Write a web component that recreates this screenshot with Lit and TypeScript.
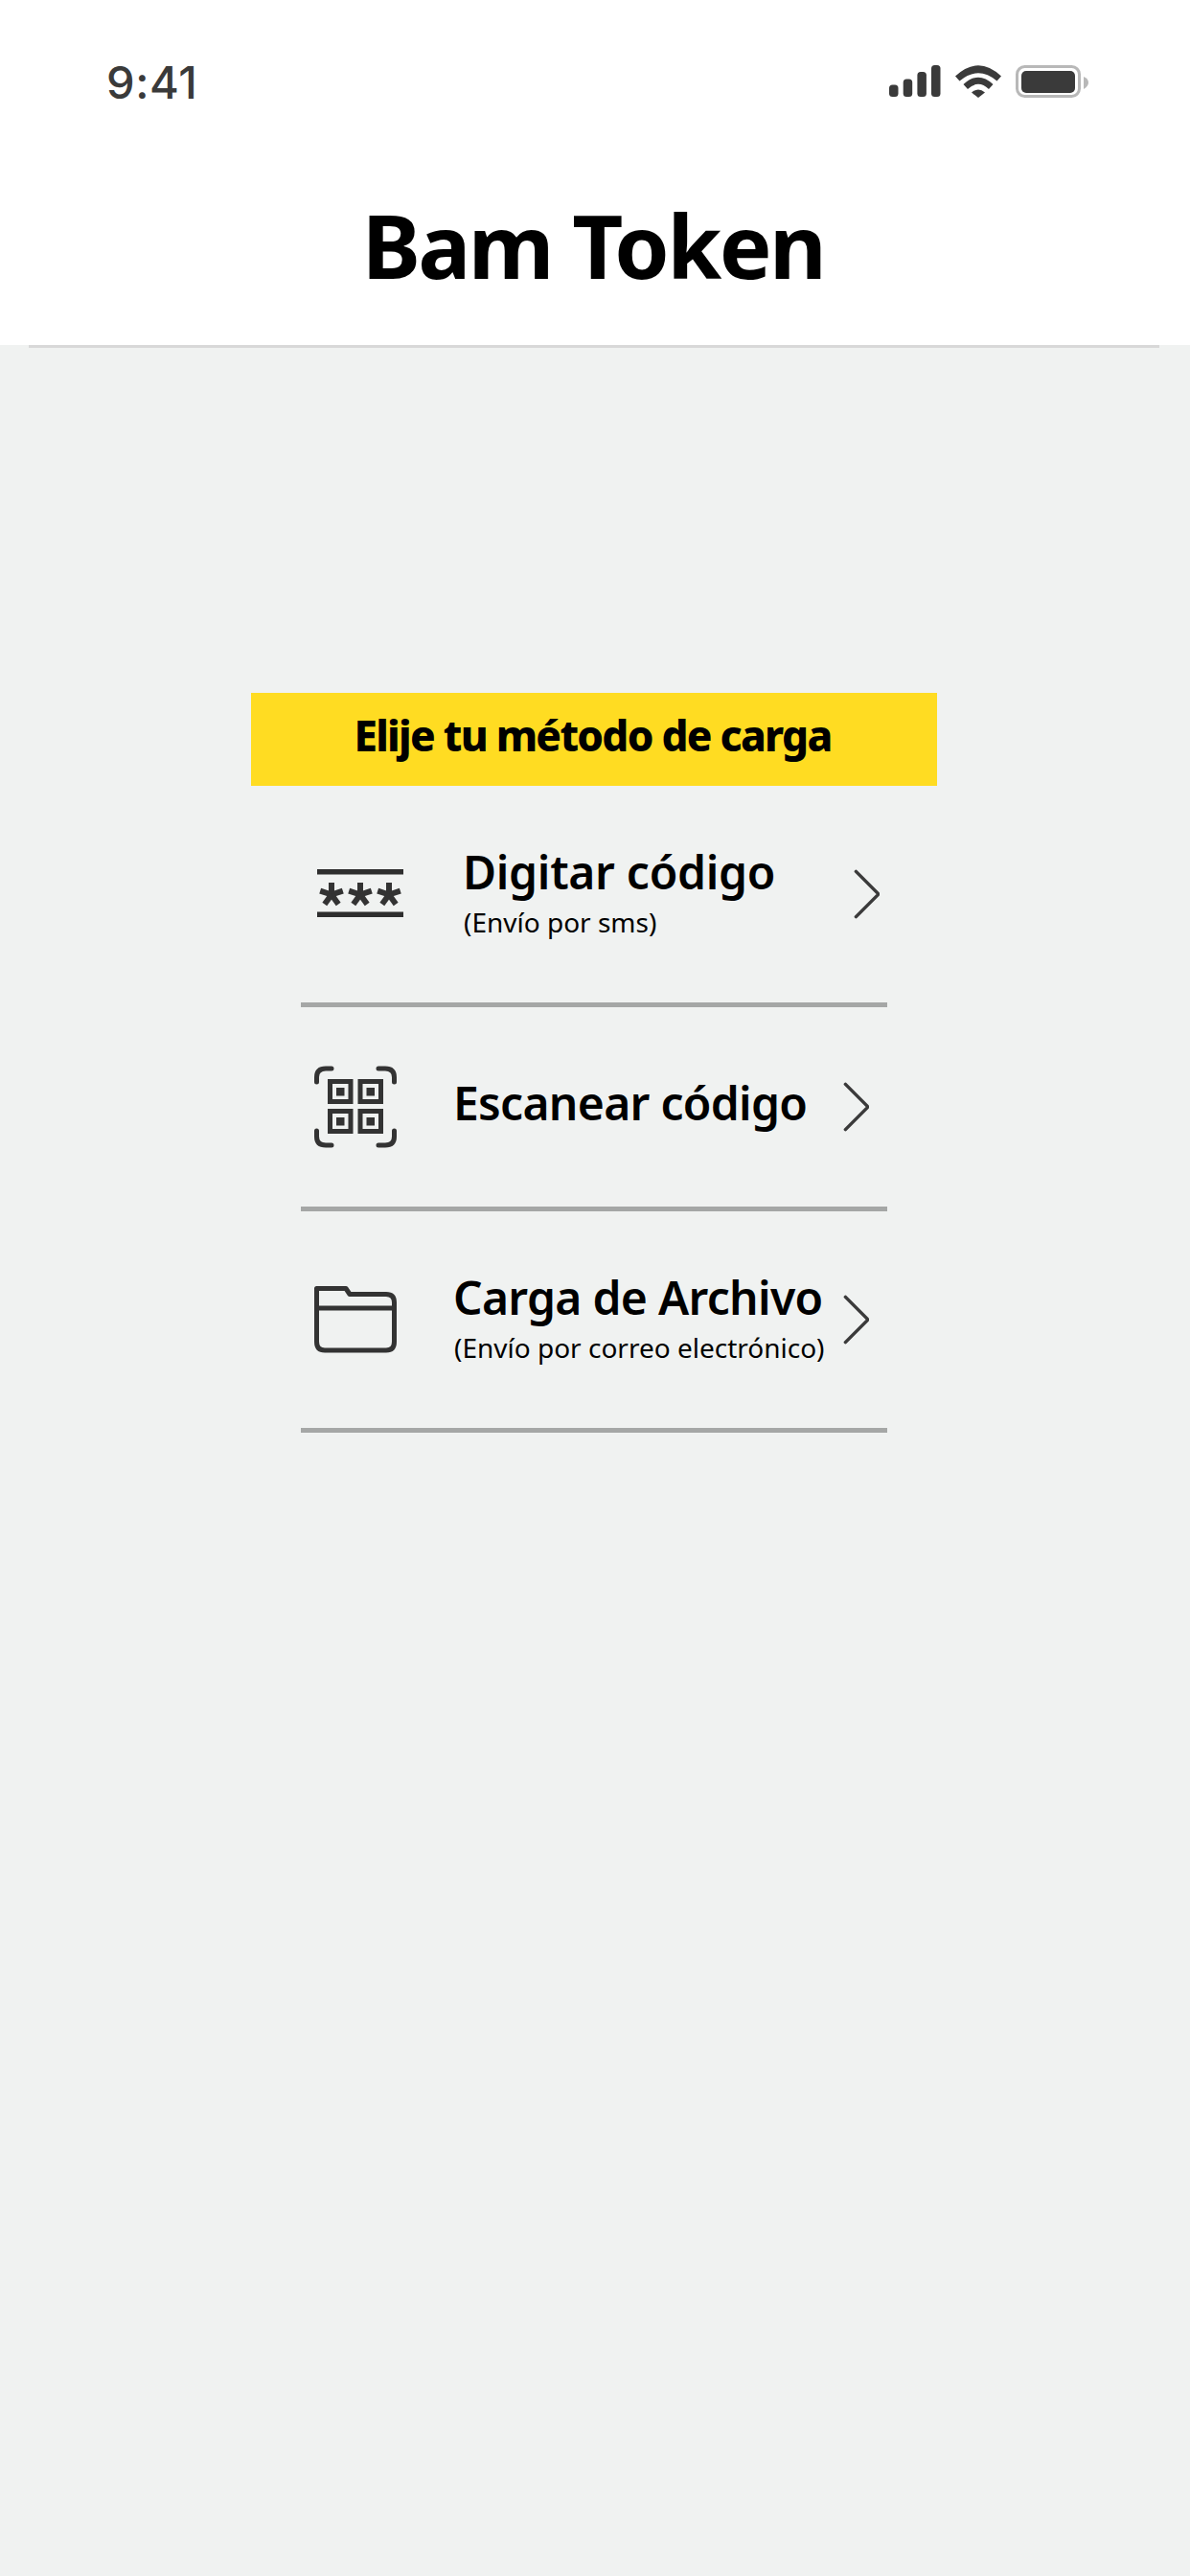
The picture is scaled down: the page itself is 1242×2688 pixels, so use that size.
import { LitElement, html, css, svg } from 'lit'
import { customElement } from 'lit/decorators.js'

const chevron = html`<svg class="chevron" width="27" height="52" viewBox="0 0 28 52" fill="none">
  <path d="M2.5 1.5 L26 25 Q26.8 26 26 27 L2.5 50.5" stroke="#3a3a3a" stroke-width="3.6" stroke-linecap="round" />
</svg>`

const star = (cx: number) => svg`<g stroke="#333" stroke-width="6">
  <path d="M${cx} 14 V26.5" />
  <path d="M${cx} 26.5 L${cx + 11.8} 22.7" />
  <path d="M${cx} 26.5 L${cx - 11.8} 22.7" />
  <path d="M${cx} 26.5 L${cx + 7.2} 36.4" />
  <path d="M${cx} 26.5 L${cx - 7.2} 36.4" />
</g>`

const starsIcon = html`<svg width="90" height="52" viewBox="0 0 90 52" fill="none">
  <rect x="0" y="0" width="90" height="5.5" fill="#2e2e2e" />
  ${star(15)}${star(45)}${star(75)}
  <rect x="0" y="44.5" width="90" height="5.5" fill="#2e2e2e" />
</svg>`

const qrCell = (x: number, y: number) => svg`
  <rect x=${x + 2.5} y=${y + 2.5} width="21.5" height="21" stroke="#333" stroke-width="5" />
  <rect x=${x + 9} y=${y + 9} width="8.5" height="8.5" fill="#333" />
`

const qrIcon = html`<svg width="86" height="86" viewBox="0 0 86 86" fill="none">
  <g stroke="#333" stroke-width="5" stroke-linecap="round">
    <path d="M2.5 17 V12 Q2.5 3 12 3 H18" />
    <path d="M67 3 H74 Q83.5 3 83.5 12 V17" />
    <path d="M2.5 68 V74 Q2.5 83 12 83 H18" />
    <path d="M67 83 H74 Q83.5 83 83.5 74 V68" />
  </g>
  ${qrCell(14, 14)}${qrCell(45.5, 14)}${qrCell(14, 45)}${qrCell(45.5, 45)}
</svg>`

const folderIcon = html`<svg width="86" height="70" viewBox="0 0 86 70" fill="none">
  <path d="M2.5 2.5 H33 L37 8.5 H75 Q83.5 8.5 83.5 17 V58 Q83.5 67 75 67 H11 Q2.5 67 2.5 58 Z"
    stroke="#333" stroke-width="5" stroke-linejoin="round" />
  <path d="M2.5 23 H83.5" stroke="#333" stroke-width="5" />
</svg>`

const signalIcon = html`<svg width="54" height="34" viewBox="0 0 54 34">
  <rect x="0" y="20.5" width="9.5" height="12.5" rx="3.5" fill="#3a3a3a" />
  <rect x="14.7" y="14.5" width="9.5" height="18.5" rx="3.5" fill="#3a3a3a" />
  <rect x="29.4" y="7" width="9.5" height="26" rx="3.5" fill="#3a3a3a" />
  <rect x="44" y="0" width="9.5" height="33" rx="3.5" fill="#3a3a3a" />
</svg>`

const wifiIcon = html`<svg width="48" height="34" viewBox="0 0 48 34" fill="#3a3a3a">
  <path d="M0 11.5 Q24 -11 48 11.5 L43.5 16.5 Q24 0 4.5 16.5 Z" />
  <path d="M8.5 20 Q24 5.5 39.5 20 L35 25 Q24 14.5 13 25 Z" />
  <path d="M17 28.5 Q24 22.5 31 28.5 L24 34 Z" />
</svg>`

const batteryIcon = html`<svg width="76" height="34" viewBox="0 0 76 34">
  <rect x="1.5" y="1.5" width="65" height="31" rx="8" fill="none" stroke="#b8b8b8" stroke-width="3" />
  <rect x="6" y="6" width="56" height="23" rx="5" fill="#3a3a3a" />
  <path d="M71 12 Q76 14 76 18 Q76 22 71 25 Z" fill="#b8b8b8" />
</svg>`

@customElement('app-root')
export class AppRoot extends LitElement {
  static styles = css`
    :host {
      display: block;
      min-height: 2688px;
      background-color: #f0f2f1;
      font-family: 'Noto Sans', 'Open Sans', sans-serif;
      color: #000;
    }

    .top {
      background-color: #fff;
      height: 360px;
    }

    .status {
      display: flex;
      align-items: center;
      justify-content: space-between;
      height: 170px;
      padding: 0 106px 0 111px;
      box-sizing: border-box;
    }

    .time {
      font-family: Inter, 'Liberation Sans', sans-serif;
      font-size: 47px;
      font-weight: 500;
      letter-spacing: 0.6px;
      color: #3a3a3a;
    }

    .status-icons {
      display: flex;
      align-items: center;
      gap: 15px;
    }

    .title {
      margin: 0;
      padding: 26px 4px 0 0;
      font-size: 92px;
      font-weight: 700;
      line-height: 120px;
      text-align: center;
      letter-spacing: -2.6px;
    }

    .rule {
      height: 3px;
      margin: 0 32px 0 30px;
      background-color: #d8d8d8;
    }

    .content {
      width: 716px;
      margin: 360px auto 0;
      transform: translateX(-1px);
    }

    .banner {
      height: 97px;
      padding-right: 3px;
      box-sizing: border-box;
      line-height: 88px;
      background-color: #ffdc22;
      font-size: 44px;
      font-weight: 800;
      text-align: center;
      letter-spacing: -1.7px;
    }

    .list {
      width: 612px;
      margin: 0 auto;
    }

    .row {
      display: flex;
      align-items: center;
      border-bottom: 5px solid #a5a7a6;
      height: 231px;
      box-sizing: border-box;
      padding: 0 19px 0 14px;
    }

    .row.first {
      padding: 0 8px 0 17px;
    }

    .row.short {
      height: 213px;
    }

    .icon {
      display: flex;
      width: 86px;
      flex: none;
    }

    .first .icon {
      width: 90px;
    }

    .text {
      display: flex;
      flex-direction: column;
      margin-left: 59px;
      padding-bottom: 4px;
      white-space: nowrap;
    }

    .short .text {
      padding-bottom: 8px;
    }

    .first .text {
      margin-left: 62px;
    }

    .name {
      font-size: 48px;
      font-weight: 600;
      line-height: 56px;
      letter-spacing: -0.7px;
    }

    .first .name {
      letter-spacing: -0.3px;
    }

    .sub {
      font-size: 28px;
      line-height: 36px;
      margin-top: 6px;
      margin-left: 1px;
    }

    .chevron {
      flex: none;
      margin-left: auto;
    }
  `

  render() {
    return html`
      <div class="top">
        <div class="status">
          <span class="time">9:41</span>
          <div class="status-icons">${signalIcon}${wifiIcon}${batteryIcon}</div>
        </div>
        <h1 class="title">Bam Token</h1>
      </div>
      <div class="rule"></div>

      <div class="content">
        <div class="banner">Elije tu método de carga</div>
        <div class="list">
          <div class="row first">
            <div class="icon">${starsIcon}</div>
            <div class="text">
              <span class="name">Digitar código</span>
              <span class="sub">(Envío por sms)</span>
            </div>
            ${chevron}
          </div>
          <div class="row short">
            <div class="icon">${qrIcon}</div>
            <div class="text">
              <span class="name">Escanear código</span>
            </div>
            ${chevron}
          </div>
          <div class="row">
            <div class="icon">${folderIcon}</div>
            <div class="text">
              <span class="name">Carga de Archivo</span>
              <span class="sub">(Envío por correo electrónico)</span>
            </div>
            ${chevron}
          </div>
        </div>
      </div>
    `
  }
}
